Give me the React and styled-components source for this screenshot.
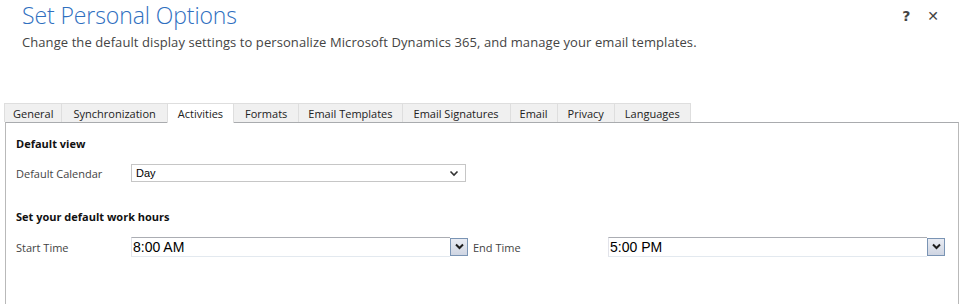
import React from "react";
import styled, { createGlobalStyle } from "styled-components";

const GlobalStyle = createGlobalStyle`
  html, body {
    margin: 0;
    padding: 0;
    background: #fff;
    font-family: "Open Sans", "Noto Sans", sans-serif;
  }
`;

const Page = styled.div`
  width: 960px;
  height: 304px;
  overflow: hidden;
  display: flex;
  flex-direction: column;
`;

const Header = styled.div`
  display: flex;
  justify-content: space-between;
  align-items: flex-start;
  padding: 0 22px 0 22px;
  height: 103px;
`;

const Title = styled.h1`
  margin: 1px 0 0 0;
  font-size: 23px;
  font-weight: 300;
  color: #2f6fbf;
  line-height: 28px;
  letter-spacing: -0.1px;
`;

const Subtitle = styled.p`
  margin: 5px 0 0 0;
  font-size: 13px;
  color: #444;
  line-height: 16px;
  letter-spacing: 0.08px;
`;

const HeaderActions = styled.div`
  display: flex;
  gap: 17px;
  margin-top: 8px;
  margin-right: -1px;
  font-family: "DejaVu Sans", sans-serif;
  color: #444;
  font-size: 14px;
  font-weight: bold;
`;

const TabStrip = styled.div`
  display: flex;
  margin-left: 5px;
`;

const Tab = styled.div`
  padding: 0 ${(p) => p.$pad}px;
  display: flex;
  align-items: center;
  font-size: 11px;
  color: #222;
  border: 1px solid #dedede;
  border-bottom: none;
  margin-left: -1px;
  background: ${(p) => (p.$active ? "#fff" : "#f0f0f0")};
  position: relative;
  z-index: ${(p) => (p.$active ? 1 : 0)};
  margin-bottom: ${(p) => (p.$active ? "-1px" : "0")};
  height: ${(p) => (p.$active ? "19px" : "18px")};
`;

const Panel = styled.div`
  flex: 1;
  margin-left: 5px;
  margin-right: 1px;
  border: 1px solid #b9b9b9;
  border-top-color: #a9abae;
  border-bottom: none;
  padding: 13px 10px 0 10px;
`;

const SectionTitle = styled.div`
  font-size: 11px;
  font-weight: 700;
  color: #111;
  height: 16px;
  line-height: 16px;
  margin-bottom: ${(p) => p.$gap}px;
`;

const Row = styled.div`
  display: flex;
  align-items: center;
  margin-bottom: ${(p) => p.$gap || 0}px;
`;

const Label = styled.div`
  width: ${(p) => p.$w}px;
  padding-left: ${(p) => p.$indent || 0}px;
  font-size: 11px;
  color: #444;
  flex-shrink: 0;
`;

const Select = styled.div`
  width: 335px;
  height: 18px;
  box-sizing: border-box;
  border: 1px solid #c6c6c6;
  display: flex;
  align-items: center;
  justify-content: space-between;
  padding: 0 6px 0 4px;
  font-family: "Liberation Sans", Arial, sans-serif;
  font-size: 11px;
  color: #000;
`;

const Combo = styled.div`
  display: flex;
  align-items: center;
  width: 337px;
  flex-shrink: 0;
`;

const ComboInput = styled.div`
  flex: 1;
  height: 20px;
  box-sizing: border-box;
  border-top: 1px solid #abadb3;
  border-left: 1px solid #e2e3ea;
  border-bottom: 1px solid #e3e9ef;
  display: flex;
  align-items: center;
  padding-left: 1px;
  font-family: "Liberation Sans", Arial, sans-serif;
  font-size: 14px;
  color: #000;
`;

const ComboButton = styled.div`
  width: 16px;
  height: 16px;
  border: 1px solid #7a94b4;
  background: linear-gradient(#e9ecf3, #cfd5e2);
  display: flex;
  align-items: center;
  justify-content: center;
  margin-bottom: 1px;
`;

const Chevron = () => (
  <svg width="10" height="10" viewBox="0 0 10 10">
    <path d="M1.5 3.5 L5 7 L8.5 3.5" fill="none" stroke="#333" strokeWidth="1.6" />
  </svg>
);

const tabs = [
  { name: "General", pad: 8 },
  { name: "Synchronization", pad: 11 },
  { name: "Activities", pad: 10, active: true },
  { name: "Formats", pad: 11 },
  { name: "Email Templates", pad: 9 },
  { name: "Email Signatures", pad: 11 },
  { name: "Email", pad: 9 },
  { name: "Privacy", pad: 10 },
  { name: "Languages", pad: 10 },
];

const TimeCombo = ({ value }) => (
  <Combo>
    <ComboInput>{value}</ComboInput>
    <ComboButton>
      <svg width="9" height="7" viewBox="0 0 9 7">
        <path d="M1 1.5 L4.5 5 L8 1.5" fill="none" stroke="#1d1d1d" strokeWidth="2" />
      </svg>
    </ComboButton>
  </Combo>
);

export default function App() {
  return (
    <Page>
      <GlobalStyle />
      <Header>
        <div>
          <Title>Set Personal Options</Title>
          <Subtitle>
            Change the default display settings to personalize Microsoft Dynamics 365, and manage your email templates.
          </Subtitle>
        </div>
        <HeaderActions>
          <span>?</span>
          <span>✕</span>
        </HeaderActions>
      </Header>
      <TabStrip>
        {tabs.map((t) => (
          <Tab key={t.name} $pad={t.pad} $active={t.active}>
            {t.name}
          </Tab>
        ))}
      </TabStrip>
      <Panel>
        <SectionTitle $gap={12}>Default view</SectionTitle>
        <Row $gap={27}>
          <Label $w={115}>Default Calendar</Label>
          <Select>
            <span>Day</span>
            <Chevron />
          </Select>
        </Row>
        <SectionTitle $gap={12}>Set your default work hours</SectionTitle>
        <Row>
          <Label $w={115}>Start Time</Label>
          <TimeCombo value="8:00 AM" />
          <Label $w={135} $indent={5}>End Time</Label>
          <TimeCombo value="5:00 PM" />
        </Row>
      </Panel>
    </Page>
  );
}
